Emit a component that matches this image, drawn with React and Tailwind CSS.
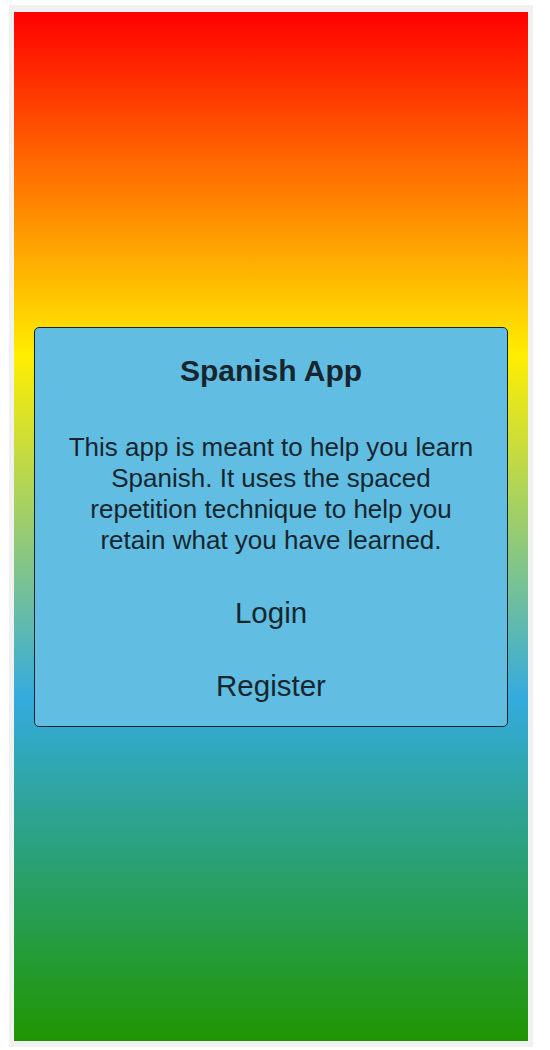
import React from 'react';

const App = () => {
  return (
    <div className="w-[550px] h-[1050px] bg-white pt-[5px] pl-[9px]" style={{ fontFamily: '"Liberation Sans", Arial, sans-serif' }}>
      <div className="w-[524px] h-[1042px] bg-[#f1f1f1] pt-[7px] pl-[5px]">
        <div className="w-[514px] h-[1029px] bg-[linear-gradient(#ff0000,#ffee00,#34abde,#1f9600)] flex items-center px-[20px]">
          <div className="w-full bg-[#61bee2] border border-[#16232b] rounded-[5px] px-[24px] pt-[25px] pb-[22px] text-center text-[#17262e]">
            <h1 className="text-[30px] font-bold leading-[36px]">Spanish App</h1>
            <p className="mt-[43px] text-[26px] leading-[31px]">
              This app is meant to help you learn Spanish. It uses the spaced repetition technique to help you retain what you have learned.
            </p>
            <div className="mt-[39px] flex flex-col items-center gap-[37px]">
              <a className="text-[29.5px] leading-[36px] cursor-pointer">Login</a>
              <a className="text-[29.5px] leading-[36px] cursor-pointer">Register</a>
            </div>
          </div>
        </div>
      </div>
    </div>
  );
};

export default App;
